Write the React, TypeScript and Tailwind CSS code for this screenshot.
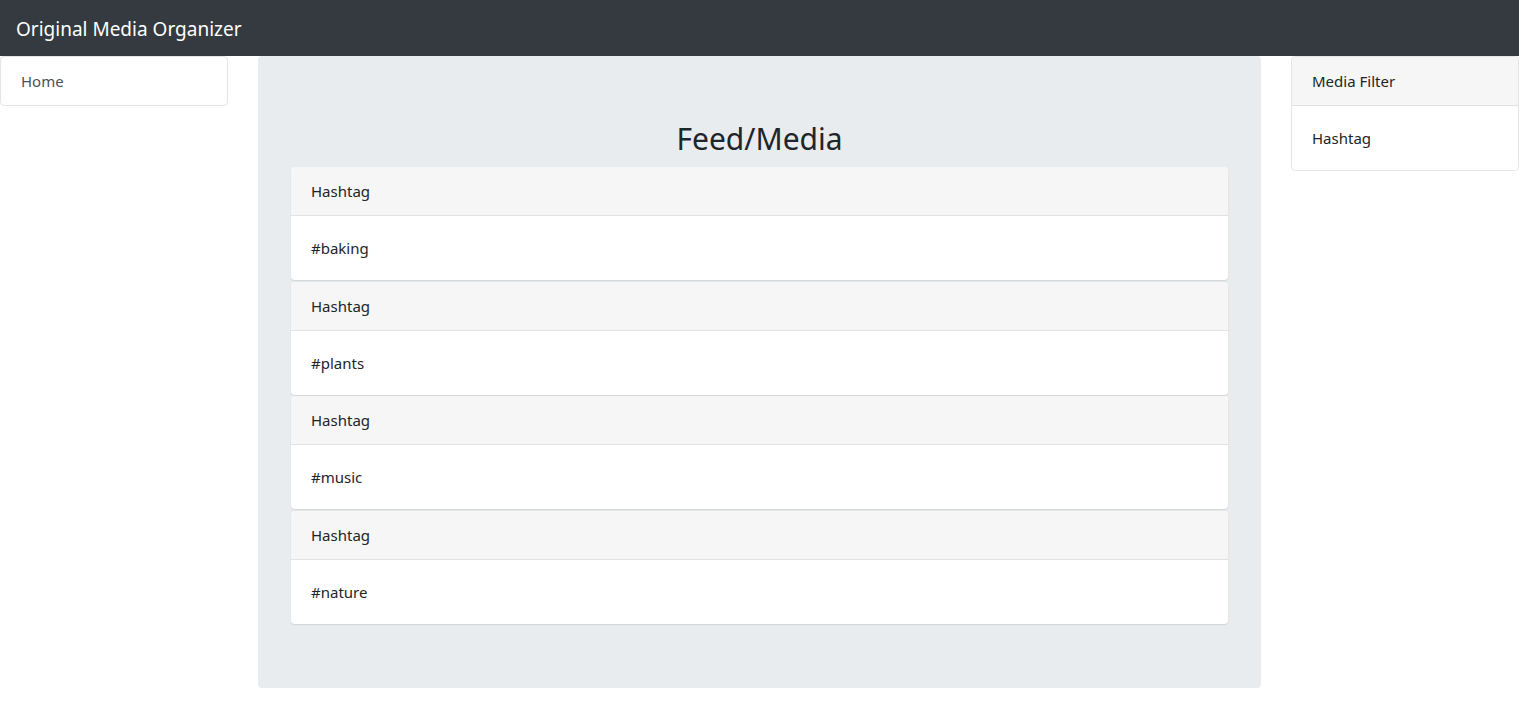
const tags = ['#baking', '#plants', '#music', '#nature'];

function FeedCard({ tag }: { tag: string }) {
  return (
    <div className="bg-white rounded shadow-[0_1px_1.5px_rgba(0,0,0,0.1)]">
      <div className="px-5 py-3 bg-[#f6f6f6] border-b border-black/[0.08] leading-6 rounded-t">Hashtag</div>
      <div className="p-5 leading-6">{tag}</div>
    </div>
  );
}

export default function App() {
  return (
    <div className="w-[1519px] text-[15px] text-[#212529] font-['Noto_Sans','Open_Sans',sans-serif]">
      <nav className="h-14 bg-[#343a40] px-4 flex items-center">
        <span className="text-[19px] text-white leading-[30px] pt-px">Original Media Organizer</span>
      </nav>

      <div className="flex gap-[30px] items-start">
        {/* sidebar */}
        <div className="w-[228px] shrink-0">
          <div className="border border-black/[0.1] rounded px-5 py-3 leading-6 text-[#495057]">Home</div>
        </div>

        {/* feed */}
        <div className="flex-1 bg-[#e9ecef] rounded px-[33px] pt-16 pb-16">
          <h1 className="text-[30px] leading-[38px] text-center mb-[9px]">Feed/Media</h1>
          <div className="flex flex-col gap-[1.5px]">
            {tags.map((t) => (
              <FeedCard key={t} tag={t} />
            ))}
          </div>
        </div>

        {/* filter */}
        <div className="w-[228px] shrink-0">
          <div className="border border-black/[0.1] rounded">
            <div className="px-5 py-3 bg-[#f6f6f6] border-b border-black/[0.08] leading-6 rounded-t">Media Filter</div>
            <div className="p-5 leading-6">Hashtag</div>
          </div>
        </div>
      </div>
    </div>
  );
}
